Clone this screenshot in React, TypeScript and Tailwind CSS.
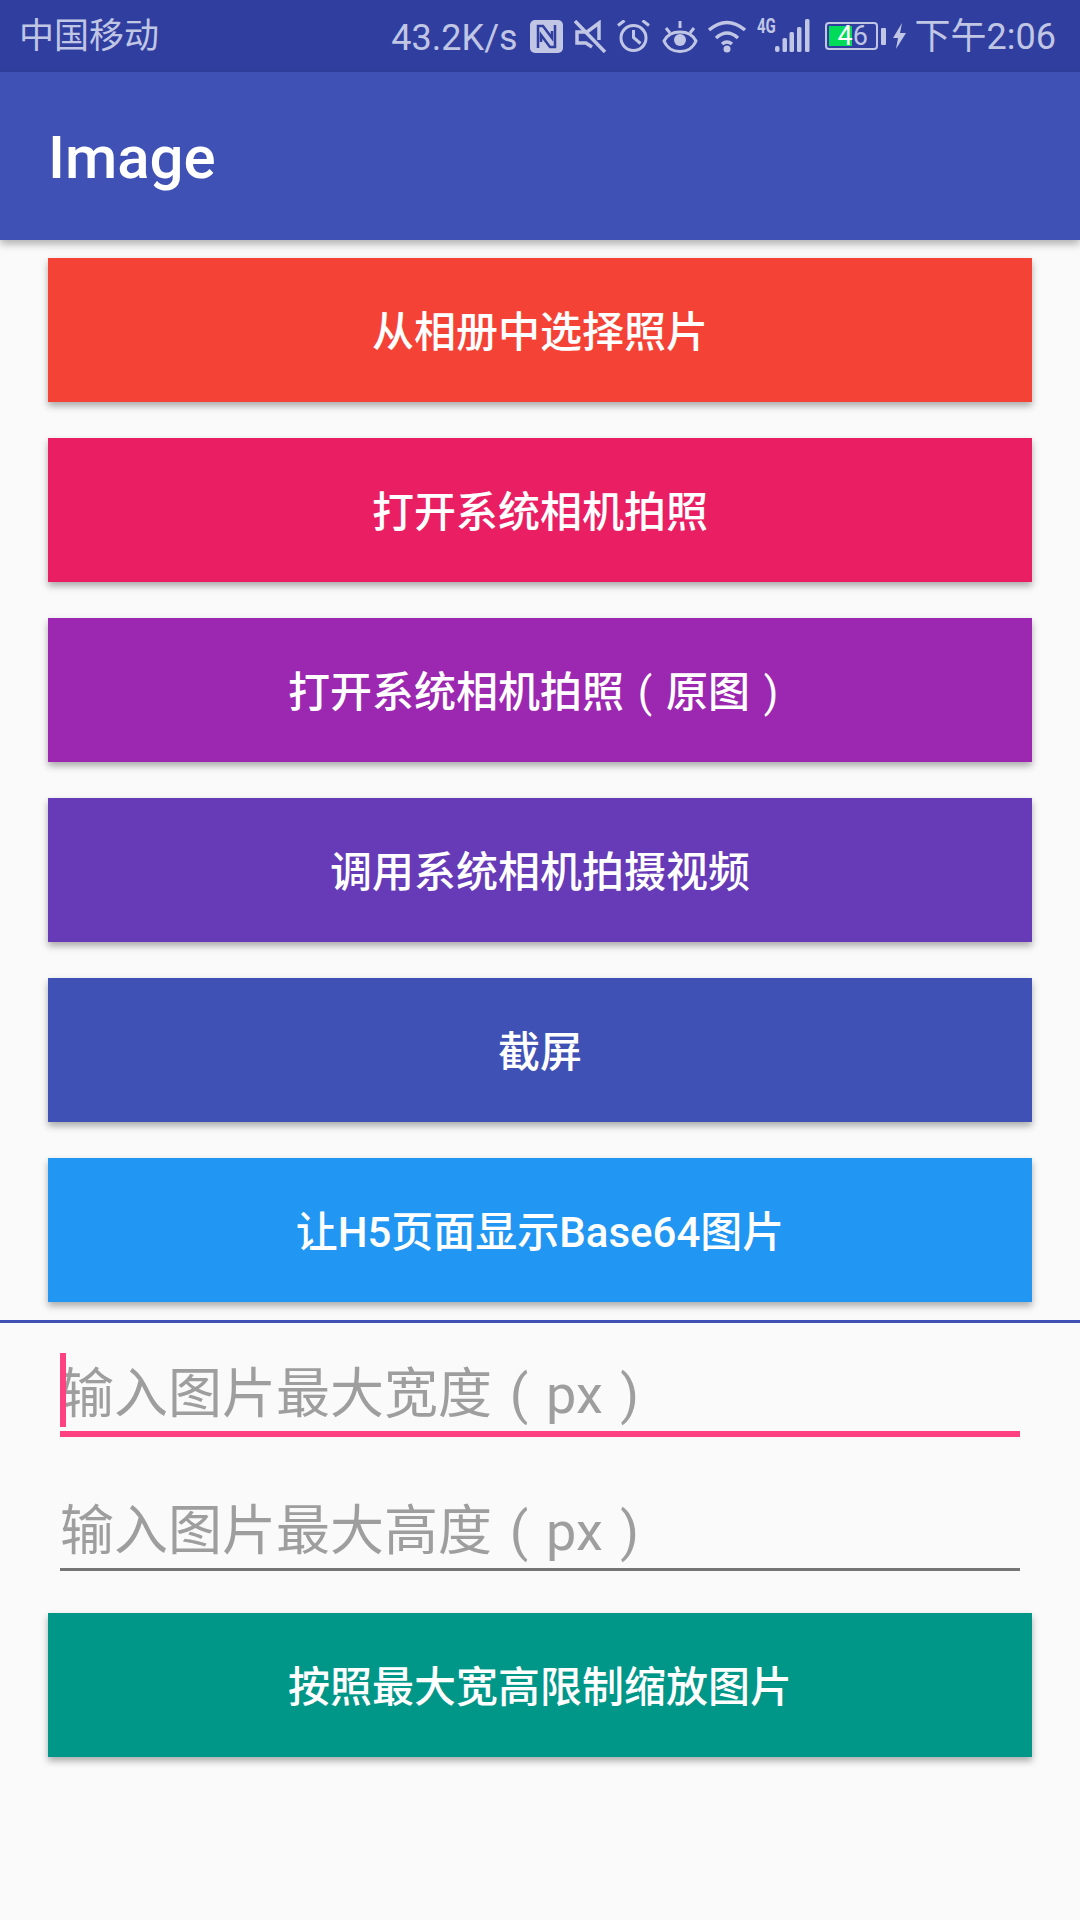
import React from 'react'

const cjk = { fontFamily: 'Roboto, "Noto Sans CJK SC", sans-serif' }

// the device draws brackets centred in a full cell, so they get their own box
function Paren({ children }: { children: string }) {
  return <span className="inline-block w-[1em] text-center font-normal">{children}</span>
}

const buttons: { id: string; label: React.ReactNode; color: string }[] = [
  { id: 'album', label: '从相册中选择照片', color: 'bg-[#F44336]' },
  { id: 'camera', label: '打开系统相机拍照', color: 'bg-[#E91E63]' },
  {
    id: 'original',
    label: (
      <>
        打开系统相机拍照<Paren>(</Paren>原图<Paren>)</Paren>
      </>
    ),
    color: 'bg-[#9C27B0]',
  },
  { id: 'video', label: '调用系统相机拍摄视频', color: 'bg-[#673AB7]' },
  { id: 'screen', label: '截屏', color: 'bg-[#3F51B5]' },
  { id: 'base64', label: '让H5页面显示Base64图片', color: 'bg-[#2196F3]' },
]

function ColorButton({ label, color }: { label: React.ReactNode; color: string }) {
  return (
    <button className={`h-[144px] w-full ${color} text-white text-[42px] font-medium flex items-center justify-center shadow-[0_4px_7px_rgba(0,0,0,0.32)]`}>
      <span className="pt-[4px]">{label}</span>
    </button>
  )
}

function StatusIcons() {
  const c = '#C0C6E4'
  return (
    <div className="flex items-center h-full">
      <span className="text-[36px] text-[#C0C6E4] mr-[12px] pt-[4px]">43.2K/s</span>
      {/* nfc */}
      <svg width="33" height="33" viewBox="0 0 33 33" className="mr-[11px]">
        <rect width="33" height="33" rx="5" fill={c} />
        <path d="M8 28V6h5l9 12v-7M25 5v22h-5l-9-12v7" fill="none" stroke="#303F9F" strokeWidth="2.500" />
      </svg>
      {/* muted */}
      <svg width="33" height="33" viewBox="0 0 33 33" className="mr-[10px]">
        <path d="M25 20V3L13 12H3v11h9l6 4" fill="none" stroke={c} strokeWidth="3.500" />
        <path d="M1 1l30 31" stroke={c} strokeWidth="3.500" />
      </svg>
      {/* alarm */}
      <svg width="33" height="33" viewBox="0 0 33 33" className="mr-[12px]">
        <circle cx="16.500" cy="18" r="12.500" fill="none" stroke={c} strokeWidth="3" />
        <path d="M16.500 10v7.500l7 6M1 5.500l6.500-5M32 5.500l-6.500-5" fill="none" stroke={c} strokeWidth="3" />
      </svg>
      {/* eye */}
      <svg width="36" height="33" viewBox="0 0 36 33" className="mr-[10px]">
        <path d="M2 21C8 9 28 9 34 21C28 35 8 35 2 21z" fill="none" stroke={c} strokeWidth="3" />
        <circle cx="18" cy="20" r="6" fill={c} />
        <path d="M18 1v7M4 8l4 5M32 8l-4 5" stroke={c} strokeWidth="3" />
      </svg>
      {/* wifi */}
      <svg width="38" height="33" viewBox="0 0 38 33" className="mr-[11px]">
        <path d="M1 10Q19 -5 37 10M8 18Q19 8 30 18M14 24Q19 20 24 24" fill="none" stroke={c} strokeWidth="3.500" />
        <circle cx="19" cy="29" r="3.500" fill={c} />
      </svg>
      {/* 4g + signal */}
      <div className="relative w-[53px] h-[34px] mr-[15px]">
        <span className="absolute left-0 top-[-2px] text-[20px] font-bold text-[#C0C6E4] leading-[18px] scale-x-[0.75] origin-left">4G</span>
        <svg width="35" height="34" viewBox="0 0 35 34" className="absolute right-0 top-0">
          <rect x="0" y="27" width="4.500" height="6" rx="2" fill={c} />
          <rect x="7.500" y="19" width="4.500" height="14" rx="1.500" fill={c} />
          <rect x="14.500" y="13" width="4.500" height="20" rx="1.500" fill={c} />
          <rect x="22" y="8" width="4.500" height="25" rx="1.500" fill={c} />
          <rect x="30" y="0" width="4.500" height="33" rx="1.500" fill={c} />
        </svg>
      </div>
      {/* battery */}
      <div className="relative w-[53px] h-[28px] border-2 border-[#C0C6E4] rounded-[4px] mr-[3px]">
        <div className="absolute left-[2px] top-[2px] w-[23px] h-[20px] bg-[#00DC5A]" />
        <span className="absolute left-[11px] top-[-3px] text-[27px] leading-[30px] text-[#C0C6E4]">
          <span className="text-white">4</span>6
        </span>
      </div>
      <div className="w-[5px] h-[17px] bg-[#C0C6E4] rounded-[1px] mr-[7px]" />
      <svg width="13" height="26" viewBox="0 0 13 26" className="mr-[9px]">
        <path d="M9 0L0 15h5l-2 11 10-16H7z" fill={c} />
      </svg>
      <span className="text-[36px] text-[#C0C6E4] pt-[2px]">下午2:06</span>
    </div>
  )
}

function HintInput({ hint, focused }: { hint: string; focused?: boolean }) {
  return (
    <div className="mx-[60px] relative h-[78px]">
      {focused && <div className="absolute left-0 top-0 w-[6px] h-[74px] bg-[#FF4081]" />}
      <div className="pt-[4px] text-[54px] leading-[76px] text-[#9E9E9E]">
        {hint}
        <Paren>(</Paren>px<Paren>)</Paren>
      </div>
      <div className={focused ? 'absolute left-0 right-0 bottom-[-6px] h-[6px] bg-[#FF4081]' : 'absolute left-0 right-0 bottom-[-3px] h-[3px] bg-[#757575]'} />
    </div>
  )
}

export default function App() {
  return (
    <div className="w-[1080px] h-[1920px] bg-[#FAFAFA] flex flex-col overflow-hidden" style={cjk}>
      <div className="h-[72px] bg-[#303F9F] flex items-center justify-between pl-[19px] pr-[24px] shrink-0">
        <span className="text-[35px] text-[#C0C6E4] pt-[2px]">中国移动</span>
        <StatusIcons />
      </div>
      <div className="relative z-10 h-[168px] bg-[#3F51B5] flex items-center pl-[48px] shrink-0 shadow-[0_4px_8px_rgba(0,0,0,0.3)]">
        <span className="text-[60px] font-medium text-white pt-[4px]">Image</span>
      </div>
      <div className="px-[48px] pt-[18px] flex flex-col gap-[36px]">
        {buttons.map((b) => (
          <ColorButton key={b.id} label={b.label} color={b.color} />
        ))}
      </div>
      <div className="h-[3px] bg-[#3F51B5] mt-[18px] mb-[30px] shrink-0" />
      <HintInput hint="输入图片最大宽度" focused />
      <div className="h-[59px] shrink-0" />
      <HintInput hint="输入图片最大高度" />
      <div className="px-[48px] mt-[45px]">
        <ColorButton label="按照最大宽高限制缩放图片" color="bg-[#009688]" />
      </div>
    </div>
  )
}
